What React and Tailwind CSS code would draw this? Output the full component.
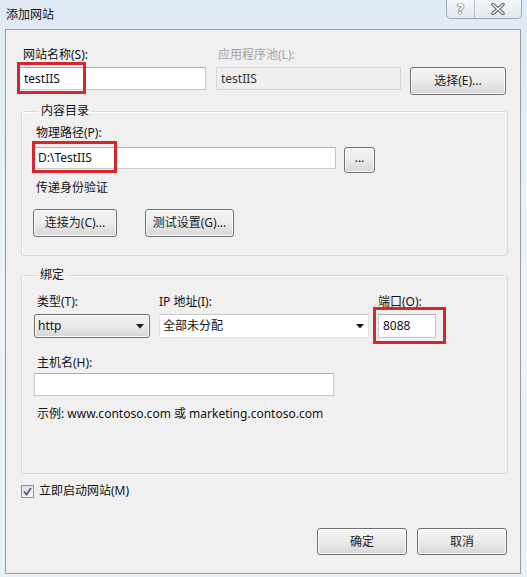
import { useState } from "react";

const font = "font-['Noto_Sans','Noto_Sans_CJK_SC',sans-serif]";

const btn =
  "flex items-center justify-center rounded-[3px] border border-[#707070] bg-gradient-to-b from-[#f4f4f4] via-[#ebebeb] to-[#d6d6d6] shadow-[inset_0_0_0_1px_#fcfcfc] text-[12px] text-[#1a1a1a]";

const textbox =
  "flex items-center border border-[#c5c9cf] border-t-[#abadb3] bg-white pl-[4px] text-[12px] text-[#111]";

// red highlight annotation drawn over an input
function RedMark({ className }) {
  return (
    <div
      className={
        "pointer-events-none absolute border-[3px] border-[#d3262d] " + className
      }
    />
  );
}

function Arrow() {
  return (
    <svg width="8" height="5" viewBox="0 0 8 5">
      <path d="M0 0 L8 0 L4 4.5 Z" fill="#1a1a1a" />
    </svg>
  );
}

function App() {
  const [start, setStart] = useState(true);

  return (
    <div
      className={`relative w-[527px] h-[577px] overflow-hidden bg-gradient-to-b from-[#dfe9f4] via-[#eef3f9] to-[#e9f0f7] ${font}`}
    >
      {/* title bar */}
      <div className="flex h-[29px] items-start justify-between">
        <div className="pl-[6px] pt-[7px] text-[12px] leading-[16px] text-[#111]">
          添加网站
        </div>
        <div className="mr-[5px] flex h-[19px] overflow-hidden rounded-b-[5px] border border-t-0 border-[#9aa6b4] bg-gradient-to-b from-[#f4f7fa] to-[#e3e9f0]">
          <div className="flex w-[28px] items-center justify-center border-r border-[#b7c0cb] text-[14px] font-bold leading-none text-white [text-shadow:0_0_1px_#444,0_0_1px_#444,0_0_1px_#444]">
            ?
          </div>
          <div className="flex w-[46px] items-center justify-center">
            <svg width="14" height="12" viewBox="0 0 14 12">
              <path
                d="M2 1.5 L12 10.5 M12 1.5 L2 10.5"
                stroke="#555"
                strokeWidth="3.4"
                strokeLinecap="round"
              />
              <path
                d="M2 1.5 L12 10.5 M12 1.5 L2 10.5"
                stroke="#fff"
                strokeWidth="1.4"
                strokeLinecap="round"
              />
            </svg>
          </div>
        </div>
      </div>

      {/* dialog body */}
      <div className="ml-[5px] h-[545px] w-[516px] border border-[#9b9b9b] bg-[#f0f0f0] pl-[13px] pr-[12px] pt-[17px] text-[12px] leading-[16px] text-[#111]">
        <div className="flex items-start">
          <div className="w-[187px]">
            <div className="ml-[4px]">网站名称(S):</div>
            <div className="relative mt-[4px]">
              <div className={`${textbox} h-[23px]`}>testIIS</div>
              <RedMark className="-left-[2px] -top-[5px] h-[32px] w-[69px]" />
            </div>
          </div>
          <div className="ml-[10px] w-[185px]">
            <div className="ml-[2px] text-[#a3a3a3]">应用程序池(L):</div>
            <div className="mt-[4px] flex h-[23px] items-center border border-[#d7d7d7] bg-[#efefef] pl-[4px] text-[#333]">
              testIIS
            </div>
          </div>
          <button className={`${btn} ml-[9px] mt-[20px] h-[28px] w-[96px]`}>
            选择(E)...
          </button>
        </div>

        <fieldset className="ml-[2px] mt-[8px] rounded-[3px] border border-[#d5dbe0] pb-[18px] pl-[11px] shadow-[inset_1px_1px_0_#fff]">
          <legend className="ml-[5px] px-[3px] leading-[16px]">内容目录</legend>
          <div className="ml-[3px] mt-[6px]">物理路径(P):</div>
          <div className="mt-[6px] flex items-start">
            <div className="relative">
              <div className={`${textbox} h-[22px] w-[303px]`}>D:\TestIIS</div>
              <RedMark className="-left-[1px] -top-[6px] h-[32px] w-[85px]" />
            </div>
            <button className={`${btn} ml-[8px] h-[26px] w-[31px] pb-[4px]`}>
              ...
            </button>
          </div>
          <div className="ml-[3px] mt-[7px]">传递身份验证</div>
          <div className="mt-[13px] flex gap-[28px]">
            <button className={`${btn} h-[28px] w-[84px]`}>连接为(C)...</button>
            <button className={`${btn} h-[28px] w-[89px]`}>测试设置(G)...</button>
          </div>
        </fieldset>

        <fieldset className="ml-[2px] mt-[11px] rounded-[3px] border border-[#d5dbe0] pb-[51px] pl-[12px] shadow-[inset_1px_1px_0_#fff]">
          <legend className="ml-[3px] px-[3px] leading-[16px]">绑定</legend>
          <div className="mt-[11px] flex items-start">
            <div className="w-[116px]">
              <div className="ml-[3px]">类型(T):</div>
              <div className="mt-[4px] flex h-[24px] items-center justify-between rounded-[3px] border border-[#707070] bg-gradient-to-b from-[#f2f2f2] via-[#ebebeb] to-[#d4d4d4] pl-[3px] pr-[5px] shadow-[inset_0_0_0_1px_#fbfbfb]">
                <span>http</span>
                <Arrow />
              </div>
            </div>
            <div className="ml-[9px] w-[210px]">
              <div>IP 地址(I):</div>
              <div className="mt-[4px] flex h-[24px] items-center justify-between border border-[#e2e2e2] border-t-[#c9c9c9] bg-white pl-[3px] pr-[4px]">
                <span>全部未分配</span>
                <Arrow />
              </div>
            </div>
            <div className="ml-[9px] w-[58px]">
              <div>端口(O):</div>
              <div className="relative mt-[4px]">
                <div className={`${textbox} h-[24px]`}>8088</div>
                <RedMark className="-left-[5px] -top-[7px] h-[37px] w-[73px]" />
              </div>
            </div>
          </div>
          <div className="ml-[3px] mt-[17px]">主机名(H):</div>
          <div className={`${textbox} mt-[2px] h-[23px] w-[300px]`} />
          <div className="ml-[3px] mt-[10px]">
            示例: www.contoso.com 或 marketing.contoso.com
          </div>
        </fieldset>

        <label className="ml-[2px] mt-[9px] flex h-[16px] cursor-pointer items-center gap-[5px]">
          <span
            onClick={() => setStart(!start)}
            className="flex h-[13px] w-[13px] items-center justify-center border border-[#8e8f8f] bg-gradient-to-br from-[#dcdcdc] to-[#fdfdfd]"
          >
            {start && (
              <svg width="9" height="9" viewBox="0 0 9 9">
                <path
                  d="M1 4.5 L3.5 7.5 L8 1"
                  fill="none"
                  stroke="#4b5e7d"
                  strokeWidth="1.8"
                />
              </svg>
            )}
          </span>
          <span>立即启动网站(M)</span>
        </label>

        <div className="mr-[1px] mt-[29px] flex justify-end gap-[10px]">
          <button
            className={`${btn} h-[27px] w-[90px] border-[#3c7fb1] shadow-[inset_0_0_0_1px_#c5e8f8,inset_0_0_2px_1px_#9fd4ee]`}
          >
            确定
          </button>
          <button className={`${btn} h-[27px] w-[90px]`}>取消</button>
        </div>
      </div>
    </div>
  );
}

export default App;
